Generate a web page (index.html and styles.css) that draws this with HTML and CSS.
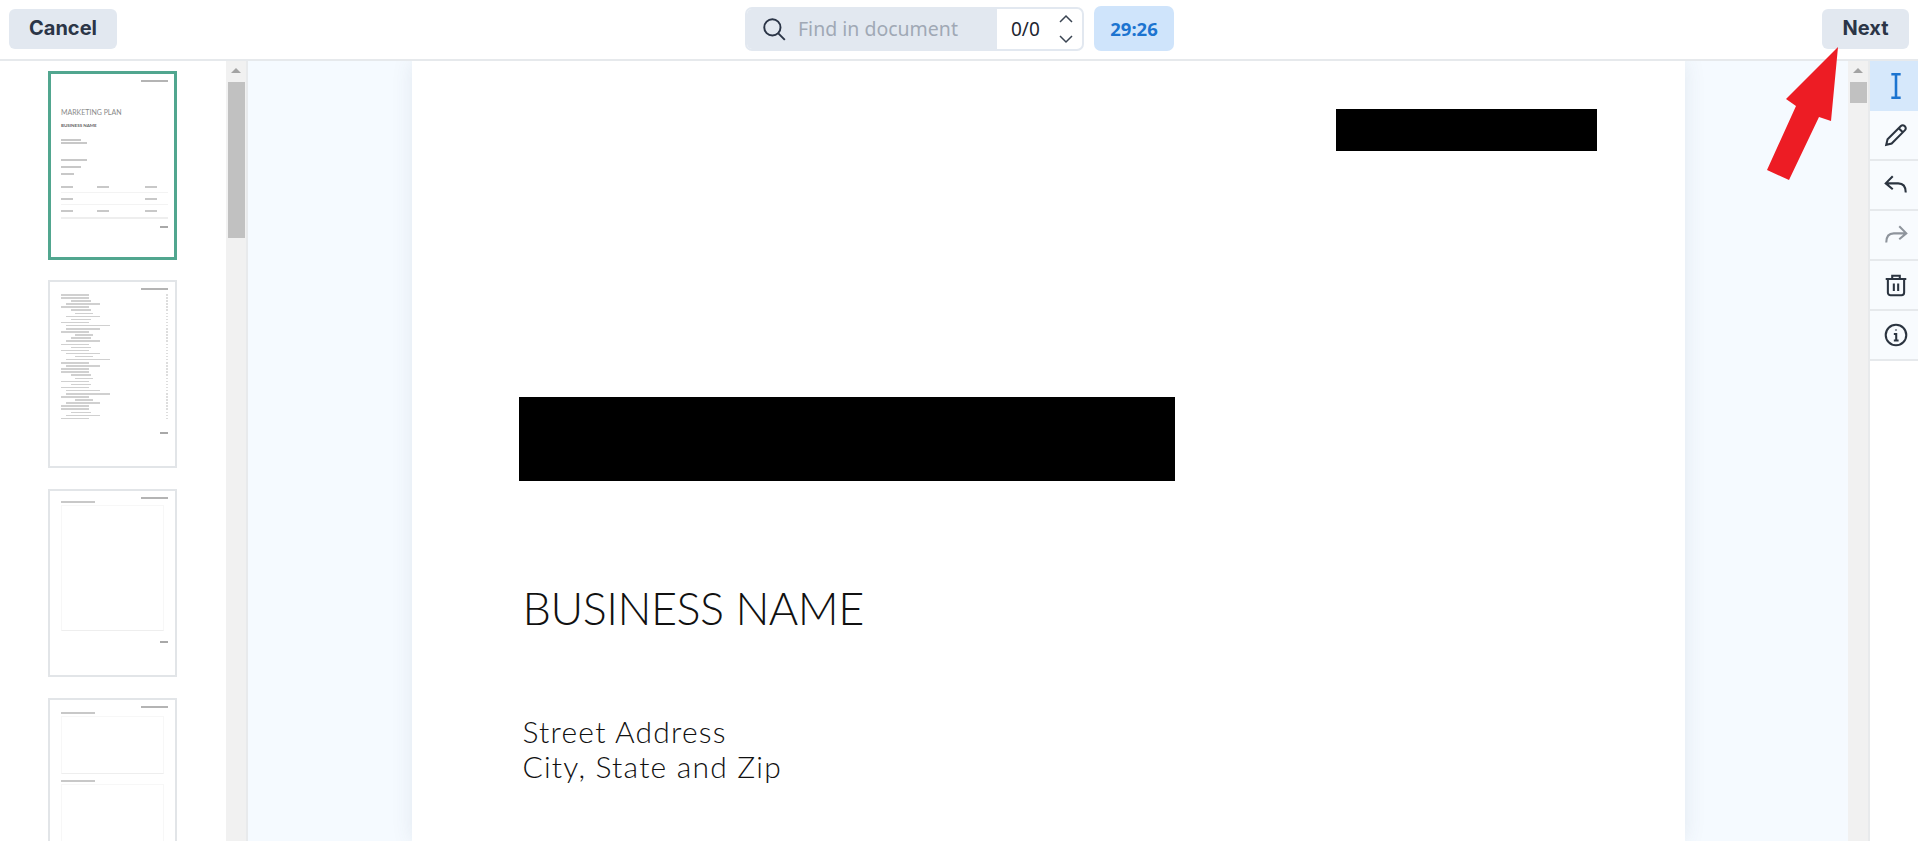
FILE: index.html
```html
<!DOCTYPE html>
<html lang="en">
<head>
	<meta charset="UTF-8">
	<meta name="viewport" content="width=device-width, initial-scale=1.0">
	<title>Document editor</title>
	<link rel="stylesheet" href="styles.css">
</head>
<body>
	<header class="topbar">
		<a class="btn" href="javascript:;">Cancel</a>
		<div class="finder">
			<div class="search">
				<svg class="search-icon" viewBox="0 0 24 24" width="26" height="26"><circle cx="10.500" cy="10.500" r="7.500"/><path d="M16 16l6 6"/></svg>
				<span class="placeholder">Find in document</span>
			</div>
			<div class="count">
				<span>0/0</span>
				<div class="arrows">
					<svg viewBox="0 0 16 10" width="16" height="10"><path d="M2 8l6-6 6 6"/></svg>
					<svg viewBox="0 0 16 10" width="16" height="10"><path d="M2 2l6 6 6-6"/></svg>
				</div>
			</div>
		</div>
		<div class="timer">29:26</div>
		<a class="btn btn-next" href="javascript:;">Next</a>
	</header>

	<main class="workspace">
		<aside class="thumbs">
			<div class="thumb-list">
				<div class="thumb active">
					<span class="bar head"></span>
					<div class="mk-title">MARKETING PLAN</div>
					<div class="mk-name">BUSINESS NAME</div>
					<span class="bar short t10"></span>
					<span class="bar mid t1"></span>
					<span class="bar mid t15"></span>
					<span class="bar short t5"></span>
					<span class="bar tiny t5"></span>
					<div class="cols t11"><span class="bar"></span><span class="bar"></span><span class="bar"></span></div>
					<div class="rule"></div>
					<div class="cols t5"><span class="bar"></span><span class="bar none"></span><span class="bar"></span></div>
					<div class="rule"></div>
					<div class="cols t5"><span class="bar"></span><span class="bar"></span><span class="bar"></span></div>
					<div class="rule wide"></div>
					<span class="bar foot first-foot"></span>
				</div>
				<div class="thumb">
					<span class="bar head"></span>
					<ul class="toc">
						<li></li><li></li><li></li><li></li><li></li><li></li><li></li><li></li><li></li><li></li>
						<li></li><li></li><li></li><li></li><li></li><li></li><li></li><li></li><li></li><li></li>
						<li></li><li></li><li></li><li></li><li></li><li></li><li></li><li></li><li></li><li></li>
						<li></li><li></li><li></li><li></li><li></li><li></li><li></li><li></li><li></li><li></li>
						<li></li>
					</ul>
					<span class="bar foot toc-foot"></span>
				</div>
				<div class="thumb">
					<span class="bar head"></span>
					<span class="bar sec"></span>
					<div class="box tall"></div>
					<span class="bar foot box-foot"></span>
				</div>
				<div class="thumb last">
					<span class="bar head"></span>
					<span class="bar sec s2"></span>
					<div class="box med"></div>
					<span class="bar sec s3"></span>
					<div class="box open"></div>
				</div>
			</div>
			<div class="scrollbar">
				<span class="scroll-up"></span>
				<span class="scroll-thumb long"></span>
			</div>
		</aside>

		<section class="viewer">
			<article class="page">
				<div class="redact top"></div>
				<div class="redact title"></div>
				<h1 class="biz">BUSINESS NAME</h1>
				<p class="addr">Street Address<br>City, State and Zip</p>
			</article>
		</section>

		<div class="scrollbar main-scroll">
			<span class="scroll-up"></span>
			<span class="scroll-thumb"></span>
		</div>

		<nav class="tools">
			<button class="tool on">
				<svg viewBox="0 0 24 24" width="28" height="28"><path d="M8 2h8M8 22h8M12 2v20"/></svg>
			</button>
			<button class="tool">
				<svg viewBox="0 0 24 24" width="26" height="26"><path d="M3 21l1.200-5L16.500 3.700a2.400 2.400 0 0 1 3.400 0l.4.4a2.400 2.400 0 0 1 0 3.400L8 19.800 3 21zM14.500 5.700l3.800 3.800"/></svg>
			</button>
			<button class="tool">
				<svg viewBox="0 0 24 24" width="26" height="26"><path d="M9 4L2.500 10.500 9 16M3 10.500h11c4.500 0 7 3 7 8.500"/></svg>
			</button>
			<button class="tool off">
				<svg viewBox="0 0 24 24" width="26" height="26"><path d="M15 4l6.500 6.500L15 16M21 10.500H10c-4.500 0-7 3-7 8.500"/></svg>
			</button>
			<button class="tool">
				<svg viewBox="0 0 24 24" width="26" height="26"><path d="M2.500 6.500h19M8.500 6V3.500h7V6M4.500 7v12a2.500 2.500 0 0 0 2.500 2.500h10a2.500 2.500 0 0 0 2.500-2.500V7M10 10.500v7M14 10.500v7"/></svg>
			</button>
			<button class="tool">
				<svg viewBox="0 0 24 24" width="26" height="26"><circle cx="12" cy="12" r="9.500"/><path d="M10 11h2.200v6M10 17h4.400M12 7v.8"/></svg>
			</button>
		</nav>
	</main>

	<!-- annotation arrow pasted on top of the screenshot -->
	<svg class="pointer" viewBox="0 0 80 140" width="80" height="140">
		<polygon points="73,3 66,77 54,73 24,136 2,126 31,62 21,55"/>
	</svg>
</body>
</html>
```

FILE: styles.css
```css
* {
	margin: 0;
	padding: 0;
	box-sizing: border-box;
}

html,
body {
	height: 100%;
	overflow: hidden;
}

body {
	display: flex;
	flex-direction: column;
	position: relative;
	background-color: #ffffff;
	font-family: "Inter", "Noto Sans", sans-serif;
	color: #2b3547;
}

a {
	text-decoration: none;
	color: inherit;
}

/* Top bar */
.topbar {
	display: flex;
	align-items: center;
	flex: none;
	height: 61px;
	padding: 0 9px 2px;
	border-bottom: 2px solid #e6e9ec;
}

.btn {
	display: flex;
	align-items: center;
	justify-content: center;
	width: 108px;
	height: 40px;
	padding-bottom: 1px;
	border-radius: 6px;
	background-color: #e2e8f0;
	font-size: 20px;
	font-weight: 700;
}

.btn-next {
	width: 87px;
}

.finder {
	display: flex;
	width: 339px;
	height: 44px;
	margin-left: 628px;
	border: 2px solid #e2e8f0;
	border-radius: 7px;
	overflow: hidden;
}

.search {
	display: flex;
	align-items: center;
	width: 250px;
	padding-left: 14px;
	background-color: #e2e8f0;
}

.search-icon {
	margin-right: 11px;
	fill: none;
	stroke: #2b3547;
	stroke-width: 1.800;
}

.placeholder {
	font-family: "Noto Sans", sans-serif;
	font-size: 19.500px;
	color: #a0a8b5;
}

.count {
	display: flex;
	align-items: center;
	flex: 1;
	padding-left: 14px;
	font-family: "Noto Sans", sans-serif;
	font-size: 19px;
	color: #1e2530;
}

.arrows {
	display: flex;
	flex-direction: column;
	gap: 10px;
	margin-left: 18px;
}

.arrows svg {
	display: block;
	fill: none;
	stroke: #3a4452;
	stroke-width: 1.500;
}

.timer {
	display: flex;
	align-items: center;
	justify-content: center;
	width: 80px;
	height: 45px;
	margin-left: 10px;
	border-radius: 7px;
	background-color: #cfe4fb;
	font-family: "Noto Sans", sans-serif;
	font-size: 18.500px;
	font-weight: 700;
	color: #1c74d0;
}

.topbar .btn-next {
	margin-left: auto;
}

/* Main area */
.workspace {
	display: flex;
	flex: 1;
	min-height: 0;
}

.thumbs {
	display: flex;
	flex: none;
	width: 248px;
	background-color: #ffffff;
}

.thumb-list {
	display: flex;
	flex-direction: column;
	gap: 21px;
	flex: none;
	width: 226px;
	height: 100%;
	padding: 10px 0 0 48px;
	overflow: hidden;
}

.thumb {
	flex: none;
	position: relative;
	width: 129px;
	height: 188px;
	padding: 6px 7px 0 11px;
	border: 2px solid #e2e5e8;
	background-color: #ffffff;
}

.thumb.active {
	height: 189px;
	margin-bottom: -1px;
	padding: 6px 6px 0 10px;
	border: 3px solid #51a68f;
}

.bar {
	display: block;
	height: 2px;
	background-color: #c8c8c8;
}

.head {
	width: 27px;
	margin-left: auto;
	background-color: #b4b4b4;
}

.mk-title {
	margin-top: 25px;
	font-family: "Lato", sans-serif;
	font-size: 7px;
	line-height: 10px;
	white-space: nowrap;
	color: #8a8a8a;
}

.mk-name {
	margin-top: 5px;
	font-family: "Lato", sans-serif;
	font-size: 4.500px;
	font-weight: 700;
	line-height: 7px;
	white-space: nowrap;
	color: #666666;
}

.short {
	width: 20px;
}

.mid {
	width: 26px;
}

.tiny {
	width: 13px;
}

.t1 {
	margin-top: 1px;
}

.t5 {
	margin-top: 5px;
}

.t10 {
	margin-top: 10px;
}

.t11 {
	margin-top: 11px;
}

.t15 {
	margin-top: 15px;
}

.cols {
	display: grid;
	grid-template-columns: 36px 48px 14px;
}

.cols .bar {
	width: 12px;
}

.cols .none {
	background: none;
}

.rule {
	height: 1px;
	margin-top: 4px;
	background-color: #f3f3f3;
}

.rule.wide {
	height: 2px;
	margin-top: 5px;
	background-color: #eeeeee;
}

.foot {
	width: 8px;
	margin: 6px 0 0 auto;
	background-color: #a8a8a8;
}

.first-foot {
	margin-top: 7px;
}

.toc {
	margin-top: 3px;
	list-style: none;
}

.toc li {
	display: flex;
	justify-content: space-between;
	height: 3.100px;
	padding-top: 1px;
}

.toc li::before {
	content: "";
	width: 28px;
	height: 1.500px;
	background-color: #d0d0d0;
}

.toc li::after {
	content: "";
	width: 2px;
	height: 1.500px;
	background-color: #dddddd;
}

.toc li:nth-child(3n)::before {
	width: 20px;
	margin-left: 10px;
}

.toc li:nth-child(4n)::before {
	width: 34px;
	margin-left: 5px;
}

.toc li:nth-child(7n)::before {
	width: 18px;
	margin-left: 14px;
}

.toc li:nth-child(11n)::before {
	width: 44px;
	margin-left: 5px;
}

.toc-foot {
	margin-top: 12px;
}

.sec {
	width: 34px;
	margin-top: 2px;
}

.sec.s2 {
	margin-top: 4px;
}

.sec.s3 {
	margin-top: 6px;
}

.box {
	margin: 2px 4px 0 0;
	border: 1px solid #f7f7f7;
}

.tall {
	height: 126px;
	border-bottom-color: #eeeeee;
}

.med {
	height: 58px;
	border-bottom-color: #eeeeee;
}

.open {
	height: 120px;
}

.box-foot {
	margin-top: 10px;
}

/* Scrollbars */
.scrollbar {
	position: relative;
	flex: none;
	width: 22px;
	padding: 21px 1px 0 2px;
	background-color: #f1f1f1;
	border-right: 2px solid #e8eaec;
}

.scroll-up {
	position: absolute;
	top: 7px;
	left: 5px;
	border-left: 5px solid transparent;
	border-right: 5px solid transparent;
	border-bottom: 5px solid #a3a3a3;
}

.scroll-thumb {
	display: block;
	height: 21px;
	background-color: #c1c1c1;
}

.scroll-thumb.long {
	height: 156px;
}

/* Page */
.viewer {
	display: flex;
	justify-content: center;
	flex: 1;
	min-width: 0;
	background-color: #f5faff;
	overflow: hidden;
}

.page {
	flex: none;
	width: 1273px;
	padding: 48px 88px 0 107px;
	background-color: #ffffff;
	box-shadow: 0 0 20px rgba(60, 80, 110, .1);
}

.redact {
	background-color: #000000;
}

.redact.top {
	width: 261px;
	height: 42px;
	margin-left: auto;
}

.redact.title {
	width: 656px;
	height: 84px;
	margin-top: 246px;
}

.biz {
	margin: 98px 0 0 4px;
	font-family: "Lato", sans-serif;
	font-size: 45px;
	font-weight: 300;
	line-height: 58px;
	letter-spacing: -.5px;
	white-space: nowrap;
	color: #111111;
}

.addr {
	margin: 77px 0 0 4px;
	font-family: "Lato", sans-serif;
	font-size: 30px;
	font-weight: 300;
	line-height: 35px;
	letter-spacing: 1.200px;
	color: #111111;
}

/* Right toolbar */
.tools {
	display: flex;
	flex-direction: column;
	flex: none;
	width: 48px;
	background-color: #ffffff;
}

.tool {
	display: flex;
	align-items: center;
	justify-content: center;
	width: 100%;
	height: 50px;
	padding-left: 4px;
	border: 0;
	border-bottom: 2px solid #e6e9ec;
	background-color: #f8fbfe;
	cursor: pointer;
}

.tool svg {
	fill: none;
	stroke: #2b3440;
	stroke-width: 1.900;
}

.tool.on {
	background-color: #d6e8fb;
	border-bottom: 0;
}

.tool.on svg {
	stroke: #1c74d0;
	stroke-width: 2.200;
}

.tool.off svg {
	stroke: #8e949c;
}

/* Red arrow */
.pointer {
	position: absolute;
	top: 44px;
	left: 1765px;
}

.pointer polygon {
	fill: #ed1c24;
}
```
